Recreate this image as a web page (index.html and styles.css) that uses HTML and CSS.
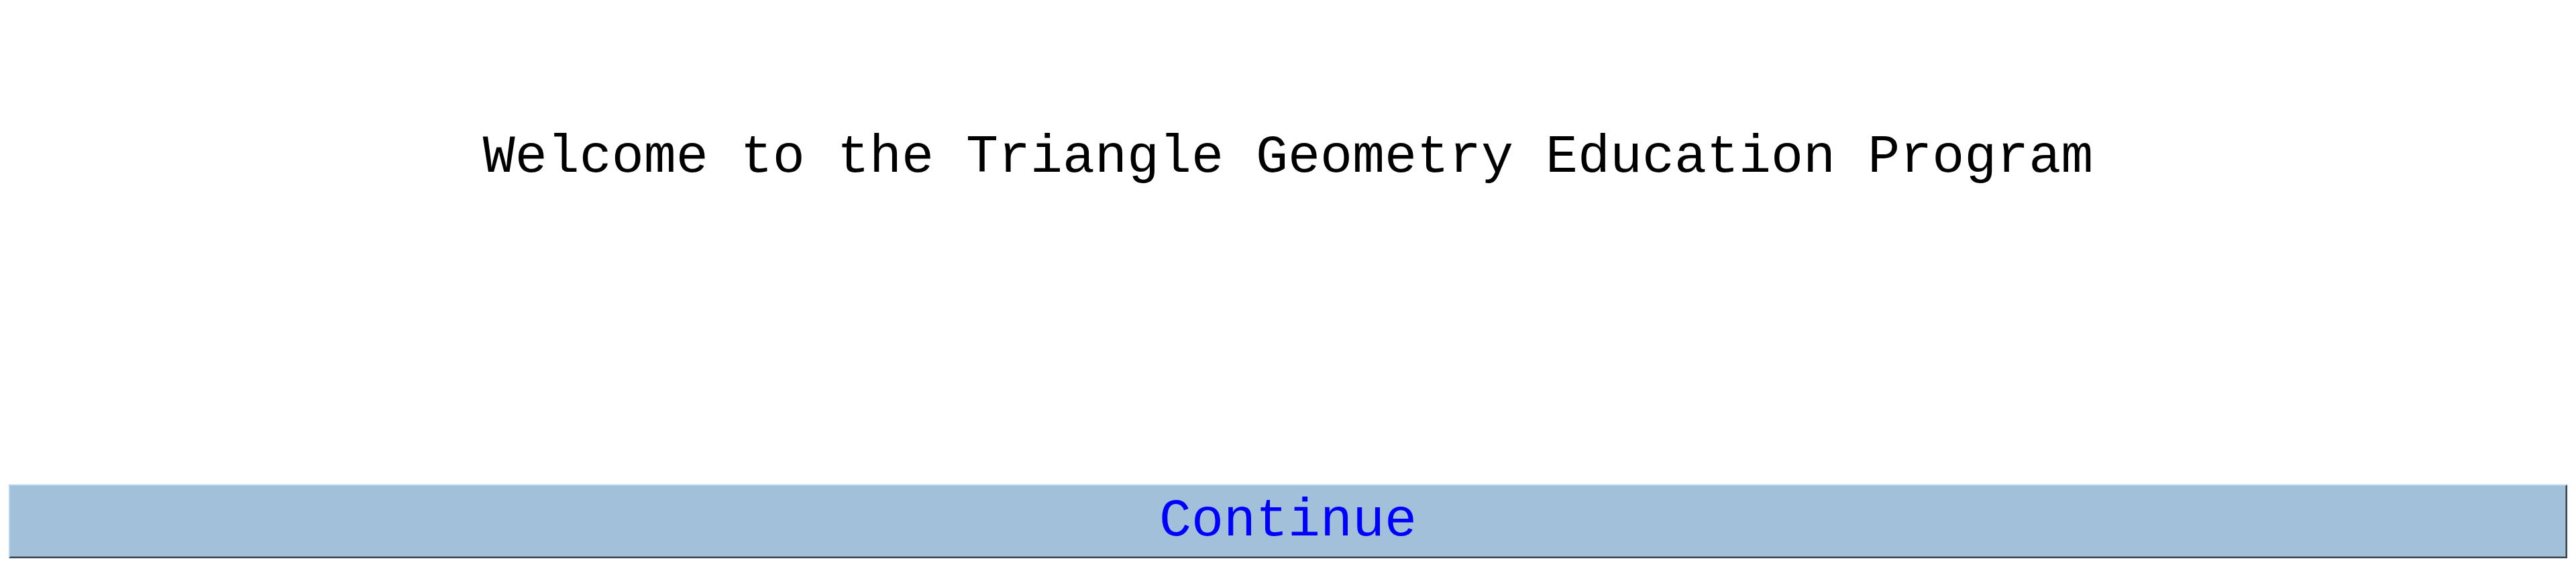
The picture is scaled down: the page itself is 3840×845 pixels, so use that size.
FILE: index.html
```html
<!DOCTYPE html>
<html lang="en">
<head>
<meta charset="utf-8">
<title>Triangle Geometry Education Program</title>
<link rel="stylesheet" href="styles.css">
</head>
<body>
<div class="screen">
  <div class="title">Welcome to the Triangle Geometry Education Program</div>
  <button class="continue" type="button">Continue</button>
</div>
</body>
</html>
```
FILE: styles.css
```css
html, body {
  margin: 0;
  padding: 0;
  background: #ffffff;
}
.screen {
  height: 845px;
  box-sizing: border-box;
  padding: 0 13px 13px 13px;
  display: flex;
  flex-direction: column;
  font-family: "Liberation Mono", monospace;
}
.title {
  padding-top: 189px;
  text-align: center;
  font-size: 80px;
  line-height: normal;
  color: #000000;
  white-space: nowrap;
}
.continue {
  margin-top: auto;
  height: 110px;
  width: 100%;
  box-sizing: border-box;
  padding: 0 0 2px 0;
  background: #a3c0db;
  color: #0000ff;
  font-family: "Liberation Mono", monospace;
  font-size: 80px;
  line-height: normal;
  border-top: 2px solid #b3d3ef;
  border-left: 2px solid #b3d3ef;
  border-right: 2px solid #38444f;
  border-bottom: 2px solid #38444f;
  box-shadow: inset -1px -1px 0 #6b7b8b;
  cursor: pointer;
}
```
